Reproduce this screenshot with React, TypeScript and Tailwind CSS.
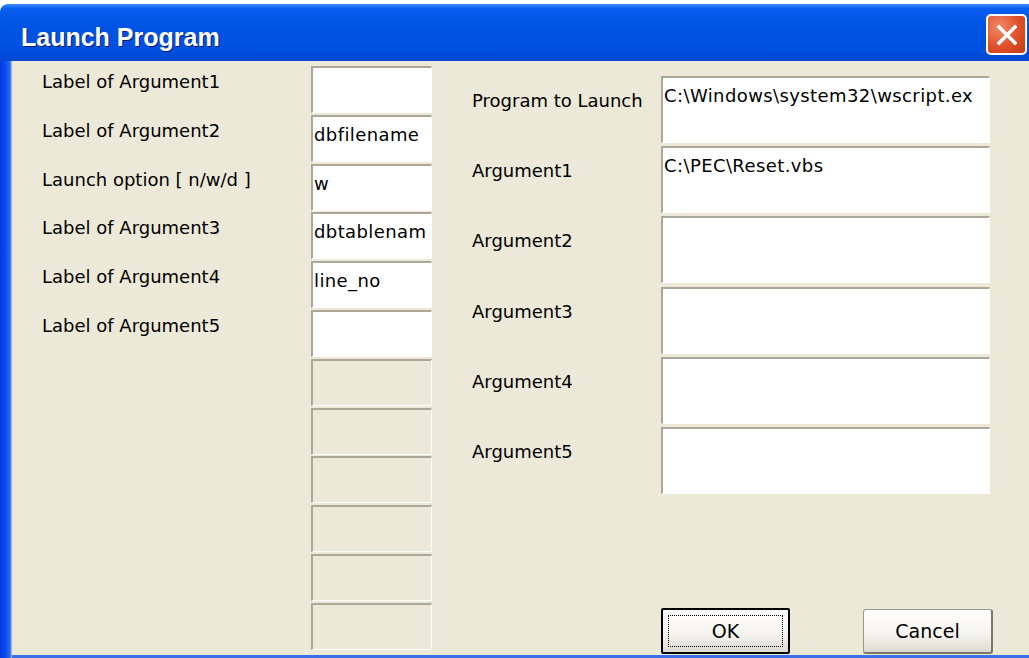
import React from "react";

const labelFont = { fontFamily: '"DejaVu Sans", Verdana, sans-serif' };
const titleFont = { fontFamily: '"Liberation Sans", Arial, sans-serif' };

const leftRows = [
  { label: "Label of Argument1", value: "" },
  { label: "Label of Argument2", value: "dbfilename" },
  { label: "Launch option [ n/w/d ]", value: "w" },
  { label: "Label of Argument3", value: "dbtablenam" },
  { label: "Label of Argument4", value: "line_no" },
  { label: "Label of Argument5", value: "" },
];

const rightRows = [
  { label: "Program to Launch", value: "C:\\Windows\\system32\\wscript.ex" },
  { label: "Argument1", value: "C:\\PEC\\Reset.vbs" },
  { label: "Argument2", value: "" },
  { label: "Argument3", value: "" },
  { label: "Argument4", value: "" },
  { label: "Argument5", value: "" },
];

function EditBox({
  value,
  disabled,
  className,
}: {
  value?: string;
  disabled?: boolean;
  className: string;
}) {
  return (
    <div
      className={`${className} overflow-hidden whitespace-nowrap border-t-2 border-l-2 border-r border-b border-t-[#aca899] border-l-[#aca899] border-r-white border-b-white pl-[1px] pt-[7px] text-[18px] leading-[22px] tracking-[0.4px] text-black ${
        disabled ? "bg-[#ece9d8]" : "bg-white"
      }`}
      style={labelFont}
    >
      {value}
    </div>
  );
}

export default function App() {
  return (
    <div className="h-[658px] w-[1029px] overflow-hidden bg-white pt-1">
      <div className="flex h-[654px] flex-col">
        {/* title bar */}
        <div className="flex h-[57px] shrink-0 items-start justify-between rounded-tl-[8px] bg-[linear-gradient(to_bottom,#3d8cfb_0%,#0a5ef0_8%,#0054e3_40%,#0050e0_80%,#0046d0_100%)] pl-[21px] pr-[2px]">
          <span
            className="pt-[18px] text-[25px] leading-[30px] font-bold text-white [text-shadow:1px_1px_0_#0a1d6c]"
            style={titleFont}
          >
            Launch Program
          </span>
          <div className="mt-[10px] flex h-[41px] w-[41px] items-center justify-center rounded-[5px] border-2 border-white bg-[radial-gradient(circle_at_30%_30%,#f08a6a,#e0502a_55%,#c43a14)]">
            <svg width="22" height="22" viewBox="0 0 22 22">
              <path
                d="M3 3 L19 19 M19 3 L3 19"
                stroke="white"
                strokeWidth="3.4"
                strokeLinecap="square"
              />
            </svg>
          </div>
        </div>

        <div className="flex flex-1">
          {/* left frame edge */}
          <div className="w-[12px] shrink-0 bg-[linear-gradient(to_right,#0838e0_0%,#0a4ef0_45%,#2c6cf0_85%,#c8d4f0_100%)]" />

          <div className="flex flex-1 flex-col">
            <div className="flex flex-1 bg-[#ece9d8] text-black" style={labelFont}>
              {/* left column */}
              <div className="flex flex-col gap-[1.8px] pl-[30px] pt-[5px]">
                {Array.from({ length: 12 }).map((_, i) => {
                  const row = leftRows[i];
                  return (
                    <div key={i} className="flex h-[47px]">
                      <div className="w-[269px] pt-[5px] text-[18px] leading-[22px]">
                        {row?.label}
                      </div>
                      <EditBox
                        className="h-[47px] w-[121px]"
                        value={row?.value}
                        disabled={!row}
                      />
                    </div>
                  );
                })}
              </div>

              {/* right column */}
              <div className="flex flex-1 flex-col pl-[40px] pt-[15px]">
                <div className="flex flex-col gap-[3.2px]">
                  {rightRows.map((row) => (
                    <div key={row.label} className="flex h-[67px]">
                      <div className="w-[189px] pt-[14px] text-[18px] leading-[22px]">
                        {row.label}
                      </div>
                      <EditBox className="h-[67px] w-[329px]" value={row.value} />
                    </div>
                  ))}
                </div>

                <div className="mt-auto flex items-end gap-[73px] pb-[1px] pl-[189px]">
                  <button className="flex h-[46px] w-[129px] items-center justify-center rounded-[2px] border-2 border-black bg-[linear-gradient(to_bottom,#ffffff,#f4f3ee_60%,#dcdad0)] p-[5px]">
                    <span className="flex h-full w-full items-center justify-center border border-dotted border-black text-[19px]">
                      OK
                    </span>
                  </button>
                  <button className="flex h-[45px] w-[130px] items-center justify-center rounded-[3px] border border-[#9c9a8e] border-r-2 border-b-2 border-r-[#7a786c] border-b-[#7a786c] bg-[linear-gradient(to_bottom,#ffffff,#f4f3ee_60%,#dcdad0)] text-[19px]">
                    Cancel
                  </button>
                </div>
              </div>
            </div>
            {/* bottom frame edge */}
            <div className="h-[3px] bg-[#3b6fe8]" />
          </div>
        </div>
      </div>
    </div>
  );
}
